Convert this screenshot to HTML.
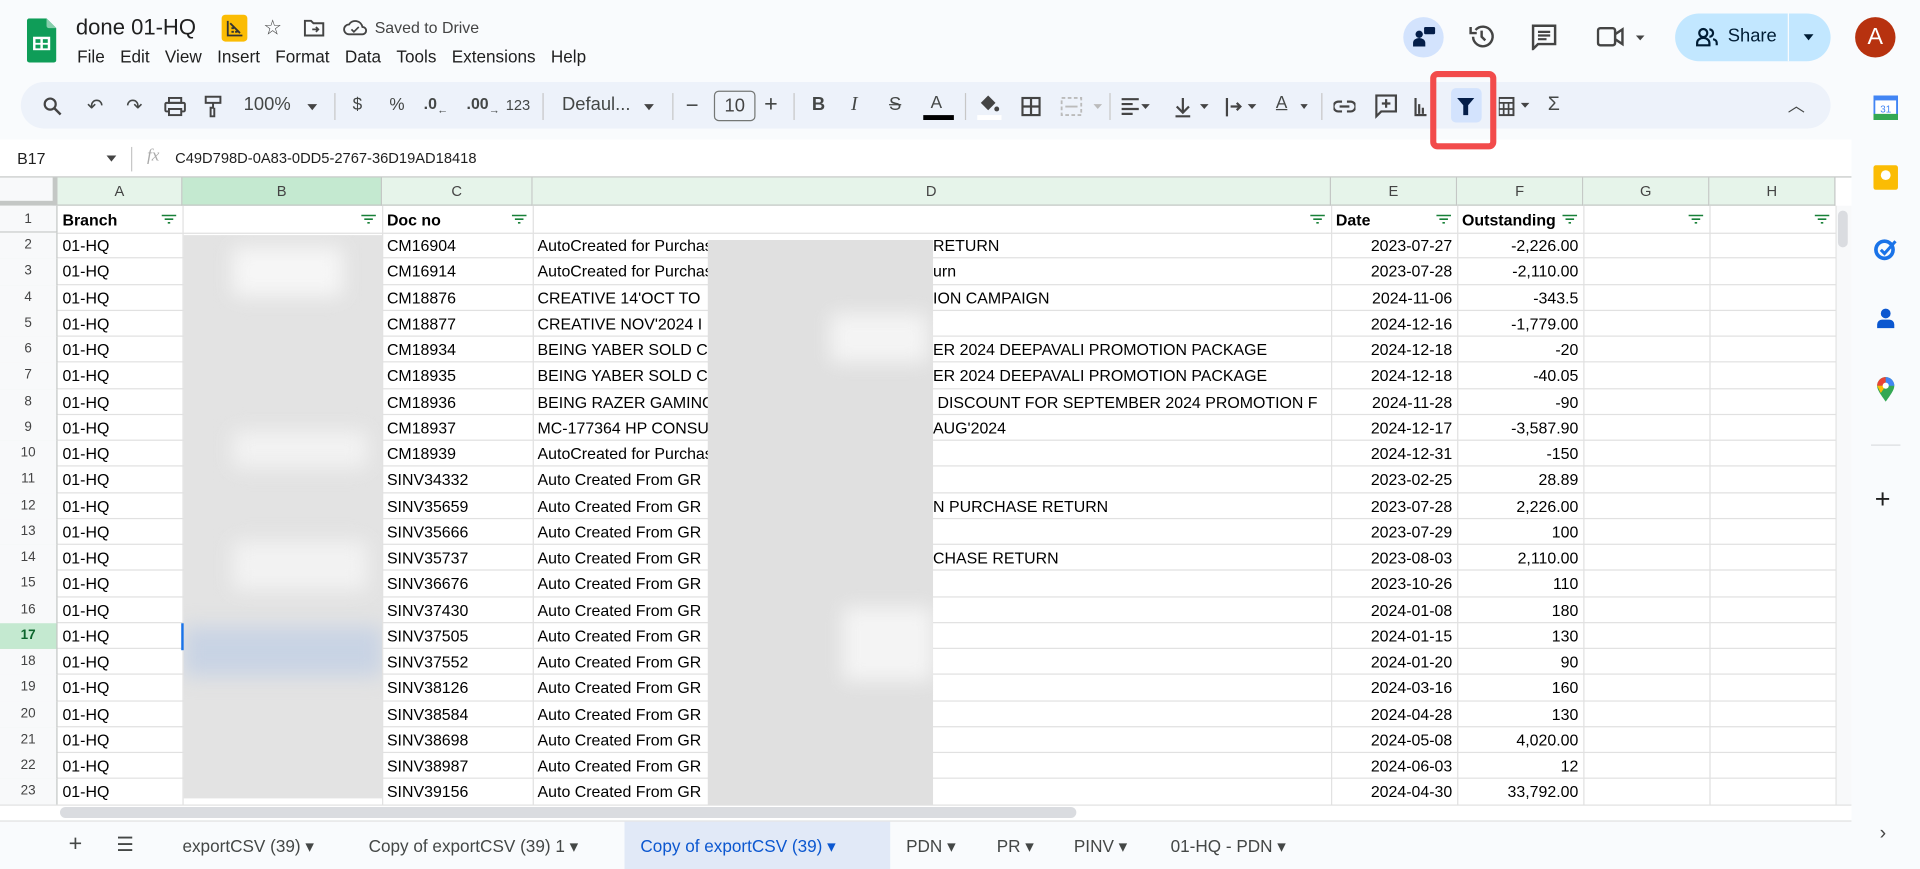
<!DOCTYPE html>
<html><head><meta charset="utf-8"><style>
*{box-sizing:border-box;margin:0;padding:0}
html,body{width:1920px;height:869px;overflow:hidden;background:#f9fbfd;font-family:"Liberation Sans",Arial,sans-serif;color:#1f1f1f}
#w{position:absolute;left:0;top:0;width:1568px;height:710px;transform:scale(1.22449);transform-origin:0 0;background:#f9fbfd}
.a{position:absolute}
.menu span{margin-right:12.5px}
.tb{position:absolute;top:77px;font-size:14px;color:#444746}
.sep{position:absolute;top:76px;width:1px;height:22px;background:#c7c7c7}
.ch{position:absolute;top:145px;height:23px;background:#e6f4ea;border-right:1px solid #c4c7c5;border-bottom:1px solid #c4c7c5;font-size:12px;color:#444;text-align:center;line-height:23px}
.rn{position:absolute;left:0;width:47px;background:#f8f9fa;border-bottom:1px solid #c4c7c5;border-right:1px solid #c4c7c5;font-size:11px;color:#444;text-align:center}
.cell{position:absolute;font-size:13px;white-space:nowrap;overflow:hidden;color:#000}
.hl{position:absolute;left:47px;width:1452px;height:1px;background:#e1e1e1}
.vl{position:absolute;top:168px;width:1px;height:490px;background:#e1e1e1}
.fi{position:absolute;width:12px;height:8px}
.tab{position:absolute;top:683px;font-size:14px;color:#444746}
</style></head><body><div id="w">
<svg class="a" style="left:22px;top:15px" width="24" height="36" viewBox="0 0 24 36"><path d="M2 0h14l8 8v26a2 2 0 0 1-2 2H2a2 2 0 0 1-2-2V2a2 2 0 0 1 2-2z" fill="#0f9d58"/><path d="M16 0l8 8h-6a2 2 0 0 1-2-2z" fill="#87ceac"/><rect x="5" y="15" width="14" height="11" fill="#fff"/><rect x="7" y="17" width="4" height="3" fill="#0f9d58"/><rect x="13" y="17" width="4" height="3" fill="#0f9d58"/><rect x="7" y="21.5" width="4" height="3" fill="#0f9d58"/><rect x="13" y="21.5" width="4" height="3" fill="#0f9d58"/></svg>
<div class="a" style="left:62px;top:12px;font-size:18px;color:#1f1f1f">done 01-HQ</div>
<div class="a" style="left:181px;top:12px;width:21px;height:22px;background:#fbbc04;border-radius:3px"></div>
<svg class="a" style="left:185px;top:16px" width="13" height="14"><path d="M1 1v12h12M3 3l8 8M4 7h2M7 10h2M4 10h2" stroke="#333" stroke-width="1.5" fill="none"/></svg>
<div class="a" style="left:215px;top:13px;font-size:17px;color:#444">☆</div>
<svg class="a" style="left:248px;top:15px" width="18" height="15"><path d="M1 2h5l2 2h8v10H1z" fill="none" stroke="#444" stroke-width="1.6"/><path d="M7 9h5M10 7l2 2-2 2" stroke="#444" stroke-width="1.4" fill="none"/></svg>
<svg class="a" style="left:280px;top:15px" width="20" height="15"><path d="M5 13a4 4 0 0 1 0-8 6 6 0 0 1 11 2 3 3 0 0 1 0 6z" fill="none" stroke="#444" stroke-width="1.5"/><path d="M7 9l2 2 4-4" stroke="#444" stroke-width="1.4" fill="none"/></svg>
<div class="a" style="left:306px;top:15px;font-size:13px;color:#444">Saved to Drive</div>
<div class="a menu" style="left:63px;top:38px;font-size:14px;color:#1f1f1f"><span>File</span><span>Edit</span><span>View</span><span>Insert</span><span>Format</span><span>Data</span><span>Tools</span><span>Extensions</span><span>Help</span></div>
<div class="a" style="left:1146px;top:14px;width:33px;height:33px;border-radius:50%;background:#d3e3fd"></div>
<svg class="a" style="left:1153px;top:21px" width="20" height="18"><circle cx="6" cy="7" r="3" fill="#041e49"/><path d="M1 17v-3a5 4 0 0 1 10 0v3z" fill="#041e49"/><rect x="10" y="1" width="9" height="6" rx="1" fill="#041e49"/></svg>
<svg class="a" style="left:1199px;top:19px" width="22" height="22"><path d="M4 11a8 8 0 1 0 2-5.5" fill="none" stroke="#444" stroke-width="2"/><path d="M2 3v5h5" fill="none" stroke="#444" stroke-width="2"/><path d="M11 6v5l3 3" stroke="#444" stroke-width="2" fill="none"/></svg>
<svg class="a" style="left:1250px;top:19px" width="22" height="22"><path d="M2 2h18v15H6l-4 4z" fill="none" stroke="#444" stroke-width="2"/><path d="M6 7h10M6 10h10M6 13h7" stroke="#444" stroke-width="1.8"/></svg>
<svg class="a" style="left:1304px;top:21px" width="40" height="18"><rect x="1" y="2" width="14" height="14" rx="2" fill="none" stroke="#444" stroke-width="2"/><path d="M15 7l6-4v12l-6-4" fill="none" stroke="#444" stroke-width="2"/><path d="M32 8h7l-3.5 4z" fill="#444"/></svg>
<div class="a" style="left:1368px;top:11px;width:127px;height:39px;border-radius:20px;background:#c2e7ff"></div>
<div class="a" style="left:1460px;top:11px;width:1px;height:39px;background:#f9fbfd"></div>
<svg class="a" style="left:1385px;top:22px" width="18" height="16"><circle cx="6" cy="5" r="3.3" fill="none" stroke="#001d35" stroke-width="1.8"/><path d="M1 15v-2a5 4 0 0 1 10 0v2z" fill="none" stroke="#001d35" stroke-width="1.8"/><path d="M11 2a3 3 0 0 1 0 6M14 10a4 3 0 0 1 3 3v2" fill="none" stroke="#001d35" stroke-width="1.8"/></svg>
<div class="a" style="left:1411px;top:21px;font-size:15px;color:#001d35">Share</div>
<div class="a" style="left:1473px;top:28px;border:4.5px solid transparent;border-top:5px solid #001d35"></div>
<div class="a" style="left:1515px;top:14px;width:33px;height:33px;border-radius:50%;background:#b7320f;color:#fff;font-size:19px;text-align:center;line-height:33px">A</div>
<div class="a" style="left:17px;top:67px;width:1478px;height:38px;border-radius:19px;background:#edf2fa"></div>
<svg class="a" style="left:35px;top:79px" width="16" height="16"><circle cx="6" cy="6" r="4.5" fill="none" stroke="#444" stroke-width="1.8"/><path d="M9.5 9.5l5 5" stroke="#444" stroke-width="2"/></svg>
<div class="tb" style="left:71px;font-size:16px">↶</div><div class="tb" style="left:103px;font-size:16px">↷</div>
<svg class="a" style="left:134px;top:79px" width="18" height="16"><rect x="4" y="1" width="10" height="4" fill="none" stroke="#444" stroke-width="1.6"/><rect x="1" y="5" width="16" height="7" rx="1" fill="none" stroke="#444" stroke-width="1.6"/><rect x="4" y="10" width="10" height="5" fill="#edf2fa" stroke="#444" stroke-width="1.6"/></svg>
<svg class="a" style="left:167px;top:78px" width="14" height="18"><rect x="1" y="1" width="12" height="5" fill="none" stroke="#444" stroke-width="1.6"/><path d="M7 6v4h-2v7h3v-7" fill="none" stroke="#444" stroke-width="1.6"/></svg>
<div class="tb" style="left:199px;font-size:15px">100%</div><div class="a" style="left:251px;top:85px;border:4px solid transparent;border-top:5px solid #444"></div>
<div class="sep" style="left:273px"></div>
<div class="tb" style="left:288px">$</div><div class="tb" style="left:318px">%</div>
<div class="tb" style="left:346px;font-size:13px;font-weight:bold">.0<sub style="font-size:9px">←</sub></div>
<div class="tb" style="left:381px;font-size:13px;font-weight:bold">.00<sub style="font-size:9px">→</sub></div>
<div class="tb" style="left:413px;font-size:12px;top:79px">123</div>
<div class="sep" style="left:443px"></div>
<div class="tb" style="left:459px;font-size:15px">Defaul...</div><div class="a" style="left:526px;top:85px;border:4px solid transparent;border-top:5px solid #444"></div>
<div class="sep" style="left:549px"></div>
<div class="tb" style="left:560px;font-size:18px;top:76px">−</div>
<div class="a" style="left:583px;top:74px;width:34px;height:25px;border:1px solid #747775;border-radius:4px;font-size:15px;text-align:center;line-height:23px;color:#444">10</div>
<div class="tb" style="left:624px;font-size:19px;top:75px">+</div>
<div class="sep" style="left:648px"></div>
<div class="tb" style="left:663px;font-weight:bold;font-size:15px">B</div>
<div class="tb" style="left:695px;font-style:italic;font-size:16px;font-family:'Liberation Serif',serif">I</div>
<div class="tb" style="left:726px;font-size:15px;text-decoration:line-through">S</div>
<div class="tb" style="left:760px;font-size:14px;top:75px">A</div><div class="a" style="left:754px;top:94px;width:25px;height:4px;background:#000"></div>
<div class="sep" style="left:788px"></div>
<svg class="a" style="left:798px;top:76px" width="20" height="22"><path d="M3 8l6-6 6 6-6 6z" fill="#444"/><circle cx="16" cy="13" r="2" fill="#444"/><rect x="0" y="18" width="20" height="4" fill="#fff"/></svg>
<svg class="a" style="left:834px;top:79px" width="16" height="16"><rect x="1" y="1" width="14" height="14" fill="none" stroke="#444" stroke-width="1.8"/><path d="M8 1v14M1 8h14" stroke="#444" stroke-width="1.8"/></svg>
<svg class="a" style="left:866px;top:79px" width="36" height="16"><rect x="1" y="1" width="16" height="14" fill="none" stroke="#bbb" stroke-width="1.5" stroke-dasharray="3 2"/><path d="M4 8h10" stroke="#bbb" stroke-width="1.5"/><path d="M27 6h7l-3.5 4z" fill="#bbb"/></svg>
<div class="sep" style="left:906px"></div>
<svg class="a" style="left:914px;top:79px" width="120" height="18"><path d="M2 2h14M2 6h9M2 10h14M2 14h9" stroke="#444" stroke-width="1.8"/><path d="M18 6h7l-3.5 4z" fill="#444"/>
<path d="M52 1v11M47 8l5 5 5-5M46 16h12" stroke="#444" stroke-width="1.8" fill="none"/><path d="M66 6h7l-3.5 4z" fill="#444"/>
<path d="M88 1v15M91 8h8M96 5l3 3-3 3" stroke="#444" stroke-width="1.8" fill="none"/><path d="M105 6h7l-3.5 4z" fill="#444"/></svg>
<div class="tb" style="left:1042px;top:75px;text-decoration:underline">A</div><div class="a" style="left:1062px;top:85px;border:3.5px solid transparent;border-top:4px solid #444"></div>
<div class="sep" style="left:1079px"></div>
<svg class="a" style="left:1089px;top:82px" width="18" height="10"><path d="M7 1H4a4 4 0 0 0 0 8h3M11 1h3a4 4 0 0 1 0 8h-3M5 5h8" fill="none" stroke="#444" stroke-width="1.8"/></svg>
<svg class="a" style="left:1123px;top:77px" width="18" height="20"><path d="M1 1h16v13H5l-4 4z" fill="none" stroke="#444" stroke-width="1.8"/><path d="M9 4v7M5.5 7.5h7" stroke="#444" stroke-width="1.8"/></svg>
<svg class="a" style="left:1155px;top:79px" width="10" height="16"><path d="M1 1v14h9M4 6v8M7 9v5" fill="none" stroke="#444" stroke-width="1.8"/></svg>
<div class="a" style="left:1185px;top:72px;width:25px;height:28px;background:#d3e3fd;border-radius:4px"></div>
<svg class="a" style="left:1189px;top:79px" width="16" height="16"><path d="M1 1h14l-5 6v8H6V7z" fill="#041e49"/></svg>
<svg class="a" style="left:1224px;top:78px" width="28" height="18"><rect x="0" y="2" width="12" height="14" fill="none" stroke="#444" stroke-width="1.6"/><path d="M0 6h12M4 6v10M8 6v10M0 11h12" stroke="#444" stroke-width="1.4"/><path d="M18 6h7l-3.5 4z" fill="#444"/></svg>
<div class="tb" style="left:1264px;font-size:16px">Σ</div>
<div class="tb" style="left:1460px;font-size:14px;top:76px">︿</div>
<div class="a" style="left:0;top:114px;width:1512px;height:31px;background:#fff"></div>
<div class="a" style="left:1168px;top:58px;width:54px;height:64px;border:5px solid #f24b4b;border-radius:6px"></div>
<div class="a" style="left:14px;top:122px;font-size:13px;color:#1f1f1f">B17</div>
<div class="a" style="left:87px;top:127px;border:4px solid transparent;border-top:5px solid #444"></div>
<div class="a" style="left:107px;top:120px;width:1px;height:20px;background:#c7c7c7"></div>
<div class="a" style="left:120px;top:120px;font-size:14px;color:#aaa;font-style:italic;font-family:'Liberation Serif',serif">fx</div>
<div class="a" style="left:143px;top:122px;font-size:12px;color:#1f1f1f">C49D798D-0A83-0DD5-2767-36D19AD18418</div>
<div class="a" style="left:0;top:144px;width:1512px;height:514px;background:#fff"></div>
<div class="a" style="left:0;top:144px;width:1512px;height:1px;background:#c4c7c5"></div>
<div class="a" style="left:0;top:145px;width:47px;height:23px;background:#f8f9fa;border-right:4px solid #c4c7c5;border-bottom:4px solid #c4c7c5"></div>
<div class="ch" style="left:47px;width:102px">A</div>
<div class="ch" style="left:149px;width:163px;background:#c4e9d0">B</div>
<div class="ch" style="left:312px;width:123px">C</div>
<div class="ch" style="left:435px;width:652px">D</div>
<div class="ch" style="left:1087px;width:103px">E</div>
<div class="ch" style="left:1190px;width:103px">F</div>
<div class="ch" style="left:1293px;width:103px">G</div>
<div class="ch" style="left:1396px;width:103px">H</div>
<div class="vl" style="left:149px"></div><div class="vl" style="left:312px"></div><div class="vl" style="left:435px"></div><div class="vl" style="left:1087px"></div><div class="vl" style="left:1190px"></div><div class="vl" style="left:1293px"></div><div class="vl" style="left:1396px"></div><div class="vl" style="left:1499px"></div>
<div class="a" style="left:1500px;top:168px;width:12px;height:490px;background:#f8f9fa"></div>
<div class="a" style="left:1501px;top:172px;width:8px;height:30px;background:#dadce0;border-radius:4px"></div>
<div class="rn" style="top:168px;height:22px;line-height:22px">1</div>
<div class="hl" style="top:190px"></div>
<div class="cell" style="left:51px;top:172px;font-weight:bold">Branch</div>
<div class="cell" style="left:316px;top:172px;font-weight:bold">Doc no</div>
<div class="cell" style="left:1091px;top:172px;font-weight:bold">Date</div>
<div class="cell" style="left:1194px;top:172px;font-weight:bold">Outstanding</div>
<svg class="fi" style="left:132px;top:175px"><path d="M0 1h12M2.5 4h7M5 7h2" stroke="#188038" stroke-width="1.3"/></svg>
<svg class="fi" style="left:295px;top:175px"><path d="M0 1h12M2.5 4h7M5 7h2" stroke="#188038" stroke-width="1.3"/></svg>
<svg class="fi" style="left:418px;top:175px"><path d="M0 1h12M2.5 4h7M5 7h2" stroke="#188038" stroke-width="1.3"/></svg>
<svg class="fi" style="left:1070px;top:175px"><path d="M0 1h12M2.5 4h7M5 7h2" stroke="#188038" stroke-width="1.3"/></svg>
<svg class="fi" style="left:1173px;top:175px"><path d="M0 1h12M2.5 4h7M5 7h2" stroke="#188038" stroke-width="1.3"/></svg>
<svg class="fi" style="left:1276px;top:175px"><path d="M0 1h12M2.5 4h7M5 7h2" stroke="#188038" stroke-width="1.3"/></svg>
<svg class="fi" style="left:1379px;top:175px"><path d="M0 1h12M2.5 4h7M5 7h2" stroke="#188038" stroke-width="1.3"/></svg>
<svg class="fi" style="left:1482px;top:175px"><path d="M0 1h12M2.5 4h7M5 7h2" stroke="#188038" stroke-width="1.3"/></svg>
<div style="position:absolute;left:0;top:190px;width:1499px">
<style>.r{position:relative;height:21.25px;border-bottom:1px solid #e1e1e1;font-size:13px;color:#000;white-space:nowrap}.r>div{position:absolute;top:3px;overflow:hidden}.r .n{left:0;top:0;width:47px;height:21.25px;line-height:21px;background:#f8f9fa;border-right:1px solid #c4c7c5;font-size:11px;color:#444;text-align:center}.r .b{left:51px}.r .c{left:316px}.r .d{left:439px;width:140px}.r .d2{left:762px;width:322px}.r .e{left:1087px;width:99px;text-align:right}.r .f{left:1190px;width:99px;text-align:right}</style>
<div class="r"><div class="n">2</div><div class="b">01-HQ</div><div class="c">CM16904</div><div class="d">AutoCreated for Purchase</div><div class="d2">RETURN</div><div class="e">2023-07-27</div><div class="f">-2,226.00</div></div>
<div class="r"><div class="n">3</div><div class="b">01-HQ</div><div class="c">CM16914</div><div class="d">AutoCreated for Purchase</div><div class="d2">urn</div><div class="e">2023-07-28</div><div class="f">-2,110.00</div></div>
<div class="r"><div class="n">4</div><div class="b">01-HQ</div><div class="c">CM18876</div><div class="d">CREATIVE 14'OCT TO</div><div class="d2">ION CAMPAIGN</div><div class="e">2024-11-06</div><div class="f">-343.5</div></div>
<div class="r"><div class="n">5</div><div class="b">01-HQ</div><div class="c">CM18877</div><div class="d">CREATIVE NOV'2024 I</div><div class="d2"></div><div class="e">2024-12-16</div><div class="f">-1,779.00</div></div>
<div class="r"><div class="n">6</div><div class="b">01-HQ</div><div class="c">CM18934</div><div class="d">BEING YABER SOLD C</div><div class="d2">ER 2024 DEEPAVALI PROMOTION PACKAGE</div><div class="e">2024-12-18</div><div class="f">-20</div></div>
<div class="r"><div class="n">7</div><div class="b">01-HQ</div><div class="c">CM18935</div><div class="d">BEING YABER SOLD C</div><div class="d2">ER 2024 DEEPAVALI PROMOTION PACKAGE</div><div class="e">2024-12-18</div><div class="f">-40.05</div></div>
<div class="r"><div class="n">8</div><div class="b">01-HQ</div><div class="c">CM18936</div><div class="d">BEING RAZER GAMING</div><div class="d2">&nbsp;DISCOUNT FOR SEPTEMBER 2024 PROMOTION F</div><div class="e">2024-11-28</div><div class="f">-90</div></div>
<div class="r"><div class="n">9</div><div class="b">01-HQ</div><div class="c">CM18937</div><div class="d">MC-177364 HP CONSU</div><div class="d2">AUG'2024</div><div class="e">2024-12-17</div><div class="f">-3,587.90</div></div>
<div class="r"><div class="n">10</div><div class="b">01-HQ</div><div class="c">CM18939</div><div class="d">AutoCreated for Purchase</div><div class="d2"></div><div class="e">2024-12-31</div><div class="f">-150</div></div>
<div class="r"><div class="n">11</div><div class="b">01-HQ</div><div class="c">SINV34332</div><div class="d">Auto Created From GR</div><div class="d2"></div><div class="e">2023-02-25</div><div class="f">28.89</div></div>
<div class="r"><div class="n">12</div><div class="b">01-HQ</div><div class="c">SINV35659</div><div class="d">Auto Created From GR</div><div class="d2">N PURCHASE RETURN</div><div class="e">2023-07-28</div><div class="f">2,226.00</div></div>
<div class="r"><div class="n">13</div><div class="b">01-HQ</div><div class="c">SINV35666</div><div class="d">Auto Created From GR</div><div class="d2"></div><div class="e">2023-07-29</div><div class="f">100</div></div>
<div class="r"><div class="n">14</div><div class="b">01-HQ</div><div class="c">SINV35737</div><div class="d">Auto Created From GR</div><div class="d2">CHASE RETURN</div><div class="e">2023-08-03</div><div class="f">2,110.00</div></div>
<div class="r"><div class="n">15</div><div class="b">01-HQ</div><div class="c">SINV36676</div><div class="d">Auto Created From GR</div><div class="d2"></div><div class="e">2023-10-26</div><div class="f">110</div></div>
<div class="r"><div class="n">16</div><div class="b">01-HQ</div><div class="c">SINV37430</div><div class="d">Auto Created From GR</div><div class="d2"></div><div class="e">2024-01-08</div><div class="f">180</div></div>
<div class="r"><div class="n" style="background:#c4e9d0;color:#0d652d;font-weight:bold">17</div><div class="b">01-HQ</div><div class="c">SINV37505</div><div class="d">Auto Created From GR</div><div class="d2"></div><div class="e">2024-01-15</div><div class="f">130</div></div>
<div class="r"><div class="n">18</div><div class="b">01-HQ</div><div class="c">SINV37552</div><div class="d">Auto Created From GR</div><div class="d2"></div><div class="e">2024-01-20</div><div class="f">90</div></div>
<div class="r"><div class="n">19</div><div class="b">01-HQ</div><div class="c">SINV38126</div><div class="d">Auto Created From GR</div><div class="d2"></div><div class="e">2024-03-16</div><div class="f">160</div></div>
<div class="r"><div class="n">20</div><div class="b">01-HQ</div><div class="c">SINV38584</div><div class="d">Auto Created From GR</div><div class="d2"></div><div class="e">2024-04-28</div><div class="f">130</div></div>
<div class="r"><div class="n">21</div><div class="b">01-HQ</div><div class="c">SINV38698</div><div class="d">Auto Created From GR</div><div class="d2"></div><div class="e">2024-05-08</div><div class="f">4,020.00</div></div>
<div class="r"><div class="n">22</div><div class="b">01-HQ</div><div class="c">SINV38987</div><div class="d">Auto Created From GR</div><div class="d2"></div><div class="e">2024-06-03</div><div class="f">12</div></div>
<div class="r"><div class="n">23</div><div class="b">01-HQ</div><div class="c">SINV39156</div><div class="d">Auto Created From GR</div><div class="d2"></div><div class="e">2024-04-30</div><div class="f">33,792.00</div></div>
</div>
<div class="a" style="left:150px;top:192px;width:162px;height:460px;background:#e3e3e3;overflow:hidden">
<div class="a" style="left:40px;top:10px;width:90px;height:40px;background:#f6f6f6;filter:blur(8px)"></div>
<div class="a" style="left:40px;top:160px;width:110px;height:30px;background:#f2f2f2;filter:blur(8px)"></div>
<div class="a" style="left:40px;top:250px;width:110px;height:40px;background:#f2f2f2;filter:blur(8px)"></div>
<div class="a" style="left:0;top:320px;width:162px;height:40px;background:#c8d3e4;filter:blur(8px)"></div>
</div>
<div class="a" style="left:578px;top:196px;width:184px;height:464px;background:#e0e0e0;overflow:hidden">
<div class="a" style="left:100px;top:60px;width:80px;height:40px;background:#f4f4f4;filter:blur(8px)"></div>
<div class="a" style="left:110px;top:300px;width:74px;height:60px;background:#f4f4f4;filter:blur(8px)"></div>
</div>
<div class="a" style="left:148px;top:509px;width:2px;height:22px;background:#1a73e8"></div>
<div class="a" style="left:0;top:657px;width:1512px;height:13px;background:#fff;border-top:1px solid #e1e1e1"></div>
<div class="a" style="left:49px;top:659px;width:830px;height:9px;background:#dadce0;border-radius:5px"></div>
<div class="a" style="left:0;top:670px;width:1512px;height:40px;background:#f9fbfd;border-top:1px solid #e1e1e1"></div>
<div class="a" style="left:510px;top:671px;width:217px;height:39px;background:#e1e9f7"></div>
<div class="tab" style="left:56px;font-size:19px;top:679px">+</div>
<div class="tab" style="left:95px;font-size:16px;top:680px">☰</div>
<div class="tab" style="left:149px">exportCSV (39) ▾</div>
<div class="tab" style="left:301px">Copy of exportCSV (39) 1 ▾</div>
<div class="tab" style="left:523px;color:#0b57d0">Copy of exportCSV (39) ▾</div>
<div class="tab" style="left:740px">PDN ▾</div>
<div class="tab" style="left:814px">PR ▾</div>
<div class="tab" style="left:877px">PINV ▾</div>
<div class="tab" style="left:956px">01-HQ - PDN ▾</div>
<svg class="a" style="left:1530px;top:78px" width="20" height="20"><rect x="0" y="0" width="20" height="20" rx="2" fill="#fff" stroke="#4285f4" stroke-width="3"/><rect x="0" y="15" width="20" height="5" fill="#34a853"/><rect x="0" y="0" width="20" height="4" fill="#4285f4"/><text x="10" y="14" font-size="8" text-anchor="middle" fill="#4285f4" font-family="Liberation Sans">31</text></svg>
<div class="a" style="left:1530px;top:135px;width:20px;height:20px;background:#fbbc04;border-radius:2px"></div>
<div class="a" style="left:1536px;top:139px;width:8px;height:8px;background:#fff;border-radius:50%"></div>
<svg class="a" style="left:1530px;top:193px" width="20" height="20"><circle cx="9" cy="11" r="7" fill="none" stroke="#1a73e8" stroke-width="3"/><path d="M6 11l3 3 9-10" fill="none" stroke="#1a73e8" stroke-width="2.5"/></svg>
<svg class="a" style="left:1532px;top:251px" width="16" height="18"><circle cx="8" cy="5" r="4" fill="#0b57d0"/><path d="M1 17v-3a4 4 0 0 1 4-4h6a4 4 0 0 1 4 4v3z" fill="#0b57d0"/></svg>
<svg class="a" style="left:1532px;top:307px" width="16" height="22"><path d="M8 21C3 14 1 11 1 8a7 7 0 0 1 14 0c0 3-2 6-7 13z" fill="#34a853"/><path d="M1 8a7 7 0 0 1 7-7v7z" fill="#ea4335"/><path d="M8 1a7 7 0 0 1 7 7H8z" fill="#4285f4"/><path d="M1 8h7l-4 6z" fill="#fbbc04"/><circle cx="8" cy="8" r="2.5" fill="#fff"/></svg>
<div class="a" style="left:1528px;top:363px;width:24px;height:1px;background:#dadce0"></div>
<div class="a" style="left:1531px;top:395px;font-size:22px;color:#1f1f1f">+</div>
<div class="a" style="left:1535px;top:672px;font-size:16px;color:#444">›</div>
</div></body></html>
